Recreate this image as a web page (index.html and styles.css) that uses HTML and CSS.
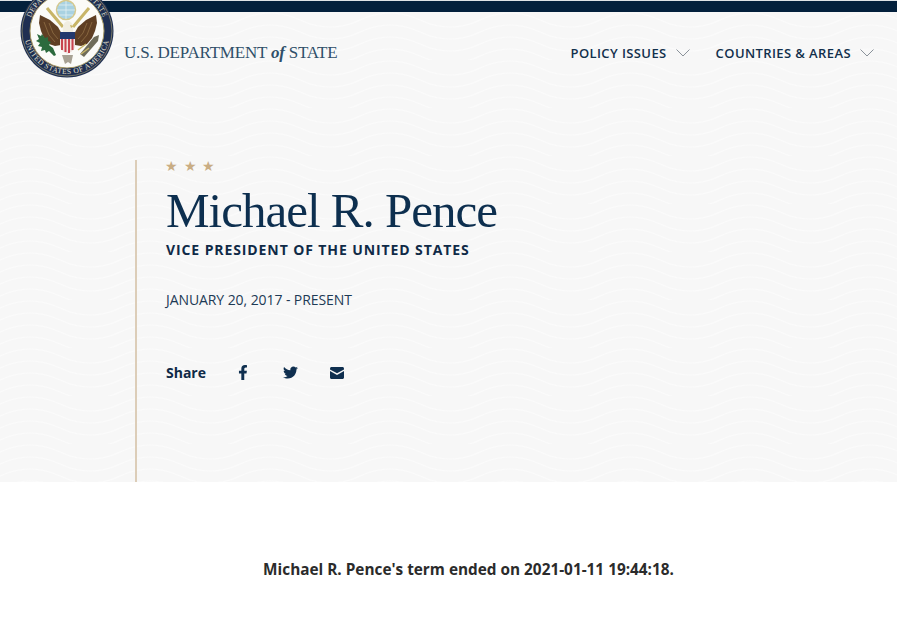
FILE: index.html
```html
<!DOCTYPE html>
<html lang="en">
  <head>
    <meta charset="UTF-8" />
    <meta name="viewport" content="width=device-width, initial-scale=1.0" />
    <title>Michael R. Pence</title>
    <link rel="stylesheet" href="styles.css">
  </head>
  <body>
    <div class="topbar"></div>

    <!-- seal hangs over the top bar -->
    <svg class="seal" viewBox="0 0 94 94" width="94" height="94">
      <defs>
        <path id="sealBottom" d="M4 47 A43 43 0 0 0 90 47" />
        <path id="sealTop" d="M8.500 47 A38.500 38.500 0 0 1 85.500 47" />
      </defs>
      <circle cx="47" cy="47" r="46.500" fill="#1f2f52" />
      <circle cx="47" cy="47" r="45" fill="none" stroke="#8d8a6c" stroke-width="0.8" />
      <circle cx="47" cy="47" r="37" fill="#fbfbf8" stroke="#a89a66" stroke-width="1" />
      <text class="seal-text">
        <textPath href="#sealBottom" startOffset="50%" text-anchor="middle">UNITED STATES OF AMERICA</textPath>
      </text>
      <text class="seal-text">
        <textPath href="#sealTop" startOffset="50%" text-anchor="middle">DEPARTMENT OF STATE</textPath>
      </text>
      <!-- gold stalks -->
      <path d="M27 24 L43 43 M69 24 L53 43" stroke="#c8b568" stroke-width="3" fill="none" />
      <!-- globe -->
      <circle cx="46" cy="26" r="9.500" fill="#a9d2e2" stroke="#d5c98e" stroke-width="1.500" />
      <path d="M37 26h18M46 17v18M39 21h14M39 31h14" stroke="#e3f0f4" stroke-width="0.8" fill="none" />
      <!-- wings -->
      <path d="M43 52 L38 43 L30 36 L20 31 L19 39 L21 47 L24 54 L29 60 L35 62 L41 61 Z" fill="#5f3f24" />
      <path d="M53 52 L58 43 L66 36 L76 31 L77 39 L75 47 L72 54 L67 60 L61 62 L55 61 Z" fill="#5f3f24" />
      <path d="M24 38 L29 51 L35 58 M29 39 L33 49 L38 55 M72 38 L67 51 L61 58 M67 39 L63 49 L58 55" stroke="#8a6a42" stroke-width="0.9" fill="none" />
      <!-- head -->
      <path d="M43 48 C42 42 44 37 48 37 C52 37 54 42 53 48z" fill="#f1eee2" />
      <path d="M50 41 l4 1 -3 2z" fill="#c8b568" />
      <!-- shield -->
      <path d="M40 48h15v7H40z" fill="#23396d" />
      <path d="M40 55h15v7c0 4-4 6-7.500 8-3.500-2-7.500-4-7.500-8z" fill="#f0e3df" />
      <path d="M42 55v11M45.500 55v13M49 55v14M52.500 55v11" stroke="#c8434f" stroke-width="2" fill="none" />
      <!-- olive branch and arrows -->
      <path d="M17 50 l4 2 1 -2 3 4 3 -1 0 4 3 1 -2 3 4 3 3 7 -2 1 -5 -5 -3 2 -1 -3 -4 1 1 -4 -4 -1 2 -3 -4 -2 3 -2z" fill="#2c6a3d" />
      <path d="M60 70 L74 53 L79 51 L78 57 L64 73z" fill="#6f6c5a" />
      <path d="M58 66 L66 60 M61 70 L69 64" stroke="#c8b568" stroke-width="1.500" />
      <!-- tail -->
      <path d="M42 71 h11 l-2 9 -3 -2 -3 2z" fill="#a8a294" />
    </svg>

    <section class="hero">
      <header class="site-header">
        <a class="logo">U.S. DEPARTMENT <em>of</em> STATE</a>
        <nav class="main-nav">
          <a class="nav-item">POLICY ISSUES
            <svg viewBox="0 0 14 8" width="14" height="8"><path d="M.5 .5l6.500 6.500 6.500-6.500" /></svg>
          </a>
          <a class="nav-item">COUNTRIES &amp; AREAS
            <svg viewBox="0 0 14 8" width="14" height="8"><path d="M.5 .5l6.500 6.500 6.500-6.500" /></svg>
          </a>
        </nav>
      </header>

      <div class="bio">
        <div class="stars">★ ★ ★</div>
        <h1>Michael R. Pence</h1>
        <h2>VICE PRESIDENT OF THE UNITED STATES</h2>
        <p class="dates">JANUARY 20, 2017 - PRESENT</p>
        <div class="share">
          <span class="share-label">Share</span>
          <svg class="share-fb" viewBox="0 0 320 512" width="10" height="15"><path d="M279 288l14-93h-89v-60c0-25 12-50 52-50h40V6s-37-6-72-6c-73 0-121 44-121 125v70H22v93h81v224h100V288z" /></svg>
          <svg class="share-tw" viewBox="0 0 24 24" width="15" height="15"><path d="M23.900 4.600c-.9.400-1.800.7-2.800.8 1-.6 1.800-1.600 2.200-2.700-1 .6-2 1-3.100 1.200C19.300 2.900 18 2.300 16.600 2.300c-2.700 0-4.900 2.200-4.900 4.900 0 .4 0 .8.100 1.100C7.700 8.100 4.100 6.100 1.700 3.100c-.4.700-.7 1.600-.7 2.500 0 1.700.9 3.200 2.200 4.100-.8 0-1.600-.2-2.200-.6v.1c0 2.400 1.700 4.400 3.900 4.800-.4.100-.8.200-1.300.2-.3 0-.6 0-.9-.1.600 2 2.400 3.400 4.600 3.400-1.700 1.300-3.800 2.100-6.100 2.100-.4 0-.8 0-1.200-.1 2.200 1.400 4.800 2.200 7.500 2.200 9.100 0 14-7.500 14-14v-.6c1-.7 1.800-1.600 2.500-2.500z" /></svg>
          <svg class="share-mail" viewBox="0 0 14 12" width="14" height="12"><path d="M1.500 0h11C13.300 0 14 .7 14 1.500v.9L7 6.300 0 2.400v-.9C0 .7.700 0 1.500 0z" /><path d="M0 4l7 3.900L14 4v6.500c0 .8-.7 1.500-1.500 1.500h-11C.7 12 0 11.300 0 10.500z" /></svg>
        </div>
      </div>
    </section>

    <main class="term-note">
      <p>Michael R. Pence's term ended on 2021-01-11 19:44:18.</p>
    </main>
  </body>
</html>
```

FILE: styles.css
```css
html,
body {
  height: 100%;
}
body {
  position: relative;
  margin: 0;
  overflow: hidden;
  background-color: #ffffff;
  font-family: "Open Sans", "Noto Sans", sans-serif;
  color: #0f2a47;
}
.topbar {
  height: 11px;
  border-top: 1px solid #dfe3e6;
  background-color: #03203c;
}
.seal {
  position: absolute;
  top: -16px;
  left: 20px;
}
.seal-text {
  font-family: "Liberation Serif", serif;
  font-size: 7.500px;
  letter-spacing: 0.5px;
  fill: #e6e3d0;
}
.hero {
  height: 470px;
  background-color: #f7f7f7;
  /* faint wave texture */
  background-image: url("data:image/svg+xml,%3Csvg xmlns='http://www.w3.org/2000/svg' width='120' height='48'%3E%3Cg fill='none' stroke='%23fbfbfb' stroke-width='1.200'%3E%3Cpath d='M0 8q30-14 60 0t60 0M0 20q30-14 60 0t60 0M0 32q30-14 60 0t60 0M0 44q30-14 60 0t60 0'/%3E%3C/g%3E%3C/svg%3E");
}
.site-header {
  display: flex;
  align-items: center;
  justify-content: space-between;
  height: 82px;
  padding-left: 124px;
  padding-right: 23px;
}
.logo {
  font-family: "Liberation Serif", serif;
  font-size: 17px;
  letter-spacing: -0.2px;
  color: #2f4f69;
}
.logo em {
  font-weight: bold;
}
.main-nav {
  display: flex;
  gap: 26px;
}
.nav-item {
  display: flex;
  align-items: center;
  gap: 9px;
  font-size: 13px;
  font-weight: 600;
  letter-spacing: 0.4px;
  color: #12304c;
}
.nav-item svg {
  fill: none;
  stroke: #8a929a;
  stroke-width: 1;
}
.bio {
  box-sizing: border-box;
  height: 322px;
  margin-top: 66px;
  margin-left: 135px;
  padding-left: 28px;
  border-left: 2px solid #dccdb8;
}
.stars {
  font-size: 14px;
  line-height: 11px;
  word-spacing: 2px;
  color: #c9ad84;
}
h1 {
  margin: 13px 0 0 1px;
  font-family: "Liberation Serif", serif;
  font-size: 49px;
  font-weight: normal;
  line-height: 54px;
  letter-spacing: -1px;
  color: #0d2f4f;
}
h2 {
  margin: 3px 0 0 1px;
  font-size: 14px;
  font-weight: 700;
  line-height: 18px;
  letter-spacing: 0.9px;
  color: #0f2a47;
}
.dates {
  margin: 32px 0 0 1px;
  font-size: 14px;
  line-height: 18px;
  letter-spacing: -0.08px;
  color: #1d3a55;
}
.share {
  display: flex;
  align-items: center;
  margin: 54px 0 0 1px;
  fill: #0f2f4f;
}
.share-label {
  width: 72px;
  font-size: 14px;
  font-weight: 700;
}
.share-fb {
  margin-right: 35px;
}
.share-tw {
  margin-right: 32px;
}
.term-note {
  padding-top: 77px;
  text-align: center;
}
.term-note p {
  margin: 0;
  padding-left: 40px;
  font-size: 15.350px;
  font-weight: 700;
  line-height: 20px;
  color: #2b2b2b;
}
```
